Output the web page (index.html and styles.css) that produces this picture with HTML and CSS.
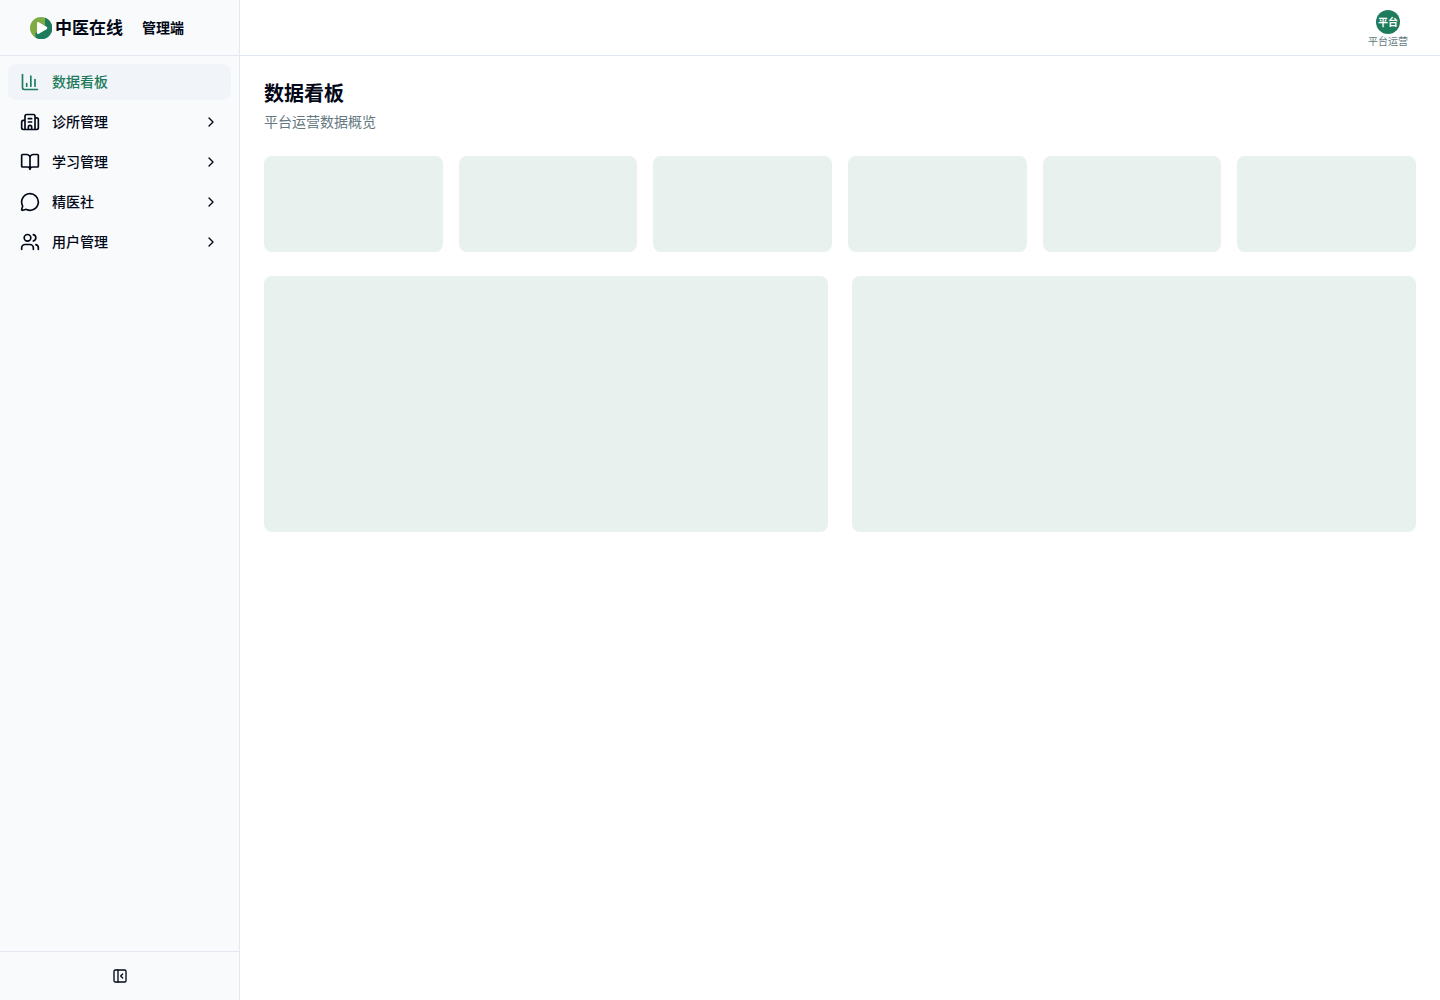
FILE: index.html
```html
<!DOCTYPE html>
<html lang="zh-CN">
<head>
<meta charset="utf-8">
<meta name="viewport" content="width=device-width, initial-scale=1">
<title>数据看板</title>
<link rel="stylesheet" href="styles.css">
</head>
<body>
<div class="app">
  <aside class="sidebar">
    <div class="brand">
      <a class="logo" href="#">
        <svg class="logo-mark" viewBox="0 0 22 22" aria-hidden="true">
          <circle cx="11" cy="11" r="11" fill="#7fab45"/>
          <path d="M15 .8A11 11 0 1 1 5.500 20.500V16L15 11Z" fill="#1e7b5b"/>
          <path d="M7 6.300Q7 4.300 8.800 5.200L16.600 9.800Q18.300 11 16.600 12.200L8.800 16.800Q7 17.700 7 15.700Z" fill="#fff"/>
        </svg>
        <span class="logo-text">中医在线</span>
      </a>
      <span class="brand-role">管理端</span>
    </div>
    <nav class="nav">
      <a class="nav-item active" href="#">
        <svg class="icon" viewBox="0 0 24 24" aria-hidden="true"><path d="M3 3v16a2 2 0 0 0 2 2h16M18 17V9M13 17V5M8 17v-3"/></svg>
        <span class="nav-label">数据看板</span>
      </a>
      <button class="nav-item" type="button">
        <svg class="icon" viewBox="0 0 24 24" aria-hidden="true"><path d="M10 12h4M10 8h4M14 21v-3a2 2 0 0 0-4 0v3M6 10H4a2 2 0 0 0-2 2v7a2 2 0 0 0 2 2h16a2 2 0 0 0 2-2V9a2 2 0 0 0-2-2h-2M6 21V5a2 2 0 0 1 2-2h8a2 2 0 0 1 2 2v16"/></svg>
        <span class="nav-label">诊所管理</span>
        <svg class="icon small" viewBox="0 0 24 24" aria-hidden="true"><path d="m9 18 6-6-6-6"/></svg>
      </button>
      <button class="nav-item" type="button">
        <svg class="icon" viewBox="0 0 24 24" aria-hidden="true"><path d="M12 7v14M3 18a1 1 0 0 1-1-1V4a1 1 0 0 1 1-1h5a4 4 0 0 1 4 4 4 4 0 0 1 4-4h5a1 1 0 0 1 1 1v13a1 1 0 0 1-1 1h-6a3 3 0 0 0-3 3 3 3 0 0 0-3-3z"/></svg>
        <span class="nav-label">学习管理</span>
        <svg class="icon small" viewBox="0 0 24 24" aria-hidden="true"><path d="m9 18 6-6-6-6"/></svg>
      </button>
      <button class="nav-item" type="button">
        <svg class="icon" viewBox="0 0 24 24" aria-hidden="true"><path d="M2.992 16.342a2 2 0 0 1 .094 1.167l-1.065 3.290a1 1 0 0 0 1.236 1.168l3.413-.998a2 2 0 0 1 1.099.092 10 10 0 1 0-4.777-4.719"/></svg>
        <span class="nav-label">精医社</span>
        <svg class="icon small" viewBox="0 0 24 24" aria-hidden="true"><path d="m9 18 6-6-6-6"/></svg>
      </button>
      <button class="nav-item" type="button">
        <svg class="icon" viewBox="0 0 24 24" aria-hidden="true"><path d="M16 21v-2a4 4 0 0 0-4-4H6a4 4 0 0 0-4 4v2M16 3.128a4 4 0 0 1 0 7.744M22 21v-2a4 4 0 0 0-3-3.870"/><circle cx="9" cy="7" r="4"/></svg>
        <span class="nav-label">用户管理</span>
        <svg class="icon small" viewBox="0 0 24 24" aria-hidden="true"><path d="m9 18 6-6-6-6"/></svg>
      </button>
    </nav>
    <div class="sidebar-footer">
      <button class="collapse" type="button" aria-label="收起侧边栏">
        <svg class="icon small" viewBox="0 0 24 24" aria-hidden="true"><rect width="18" height="18" x="3" y="3" rx="2"/><path d="M9 3v18M16 15l-3-3 3-3"/></svg>
      </button>
    </div>
  </aside>
  <div class="content">
    <header class="topbar">
      <button class="account" type="button">
        <span class="avatar">平台</span>
        <span class="account-name">平台运营</span>
      </button>
    </header>
    <main class="page">
      <div class="heading">
        <h1 class="title">数据看板</h1>
        <p class="subtitle">平台运营数据概览</p>
      </div>
      <div class="stats" aria-busy="true">
        <div class="skeleton"></div>
        <div class="skeleton"></div>
        <div class="skeleton"></div>
        <div class="skeleton"></div>
        <div class="skeleton"></div>
        <div class="skeleton"></div>
      </div>
      <div class="charts" aria-busy="true">
        <div class="skeleton tall"></div>
        <div class="skeleton tall"></div>
      </div>
    </main>
  </div>
</div>
</body>
</html>
```
FILE: styles.css
```css
*, *::before, *::after { box-sizing: border-box; }

body {
  margin: 0;
  background: #fff;
  color: #020817;
  font-family: Inter, "Noto Sans CJK SC", sans-serif;
  font-size: 14px;
  line-height: 20px;
}

button {
  padding: 0;
  border: 0;
  background: none;
  color: inherit;
  font: inherit;
  cursor: pointer;
}

a { color: inherit; text-decoration: none; }

.app { display: flex; min-height: 100vh; }

.sidebar {
  display: flex;
  flex: none;
  flex-direction: column;
  width: 240px;
  border-right: 1px solid #e2e8f0;
  background: #f8fafc;
}

.brand {
  display: flex;
  align-items: center;
  gap: 19px;
  height: 56px;
  padding: 0 30px;
  border-bottom: 1px solid #e2e8f0;
}

.logo { display: flex; align-items: center; gap: 3px; }
.logo-mark { width: 22px; height: 22px; }
.logo-text { font-size: 17px; font-weight: 700; line-height: 24px; }
.brand-role { font-weight: 700; }

.nav {
  display: flex;
  flex: 1;
  flex-direction: column;
  gap: 4px;
  padding: 8px;
}

.nav-item {
  display: flex;
  align-items: center;
  gap: 12px;
  height: 36px;
  padding: 0 12px;
  border-radius: 8px;
  font-weight: 500;
  text-align: left;
}

.nav-item.active { background: #f1f5f9; color: #1e7b5b; }
.nav-label { flex: 1; }

.icon {
  flex: none;
  width: 20px;
  height: 20px;
  fill: none;
  stroke: currentColor;
  stroke-width: 2;
  stroke-linecap: round;
  stroke-linejoin: round;
}

.icon.small { width: 16px; height: 16px; }

.sidebar-footer { padding: 8px; border-top: 1px solid #e2e8f0; }

.collapse {
  display: flex;
  align-items: center;
  justify-content: center;
  width: 100%;
  height: 32px;
}

.content { flex: 1; min-width: 0; }

.topbar {
  display: flex;
  align-items: flex-start;
  justify-content: flex-end;
  height: 56px;
  padding: 10px 32px 0;
  border-bottom: 1px solid #e2e8f0;
}

.account { display: flex; flex-direction: column; align-items: center; }

.avatar {
  display: flex;
  align-items: center;
  justify-content: center;
  width: 24px;
  height: 24px;
  border-radius: 50%;
  background: #1e7b5b;
  color: #fff;
  font-size: 10px;
  font-weight: 700;
}

.account-name { color: #647881; font-size: 10px; line-height: 14px; }

.page { display: grid; gap: 24px; padding: 24px; }

.title { margin: 0; font-size: 20px; font-weight: 700; line-height: 28px; }
.subtitle { margin: 4px 0 0; color: #647881; }

.stats { display: grid; grid-template-columns: repeat(6, 1fr); gap: 16px; }
.charts { display: grid; grid-template-columns: repeat(2, 1fr); gap: 24px; }

.skeleton { height: 96px; border-radius: 8px; background: #e8f1ee; }
.skeleton.tall { height: 256px; }
```
